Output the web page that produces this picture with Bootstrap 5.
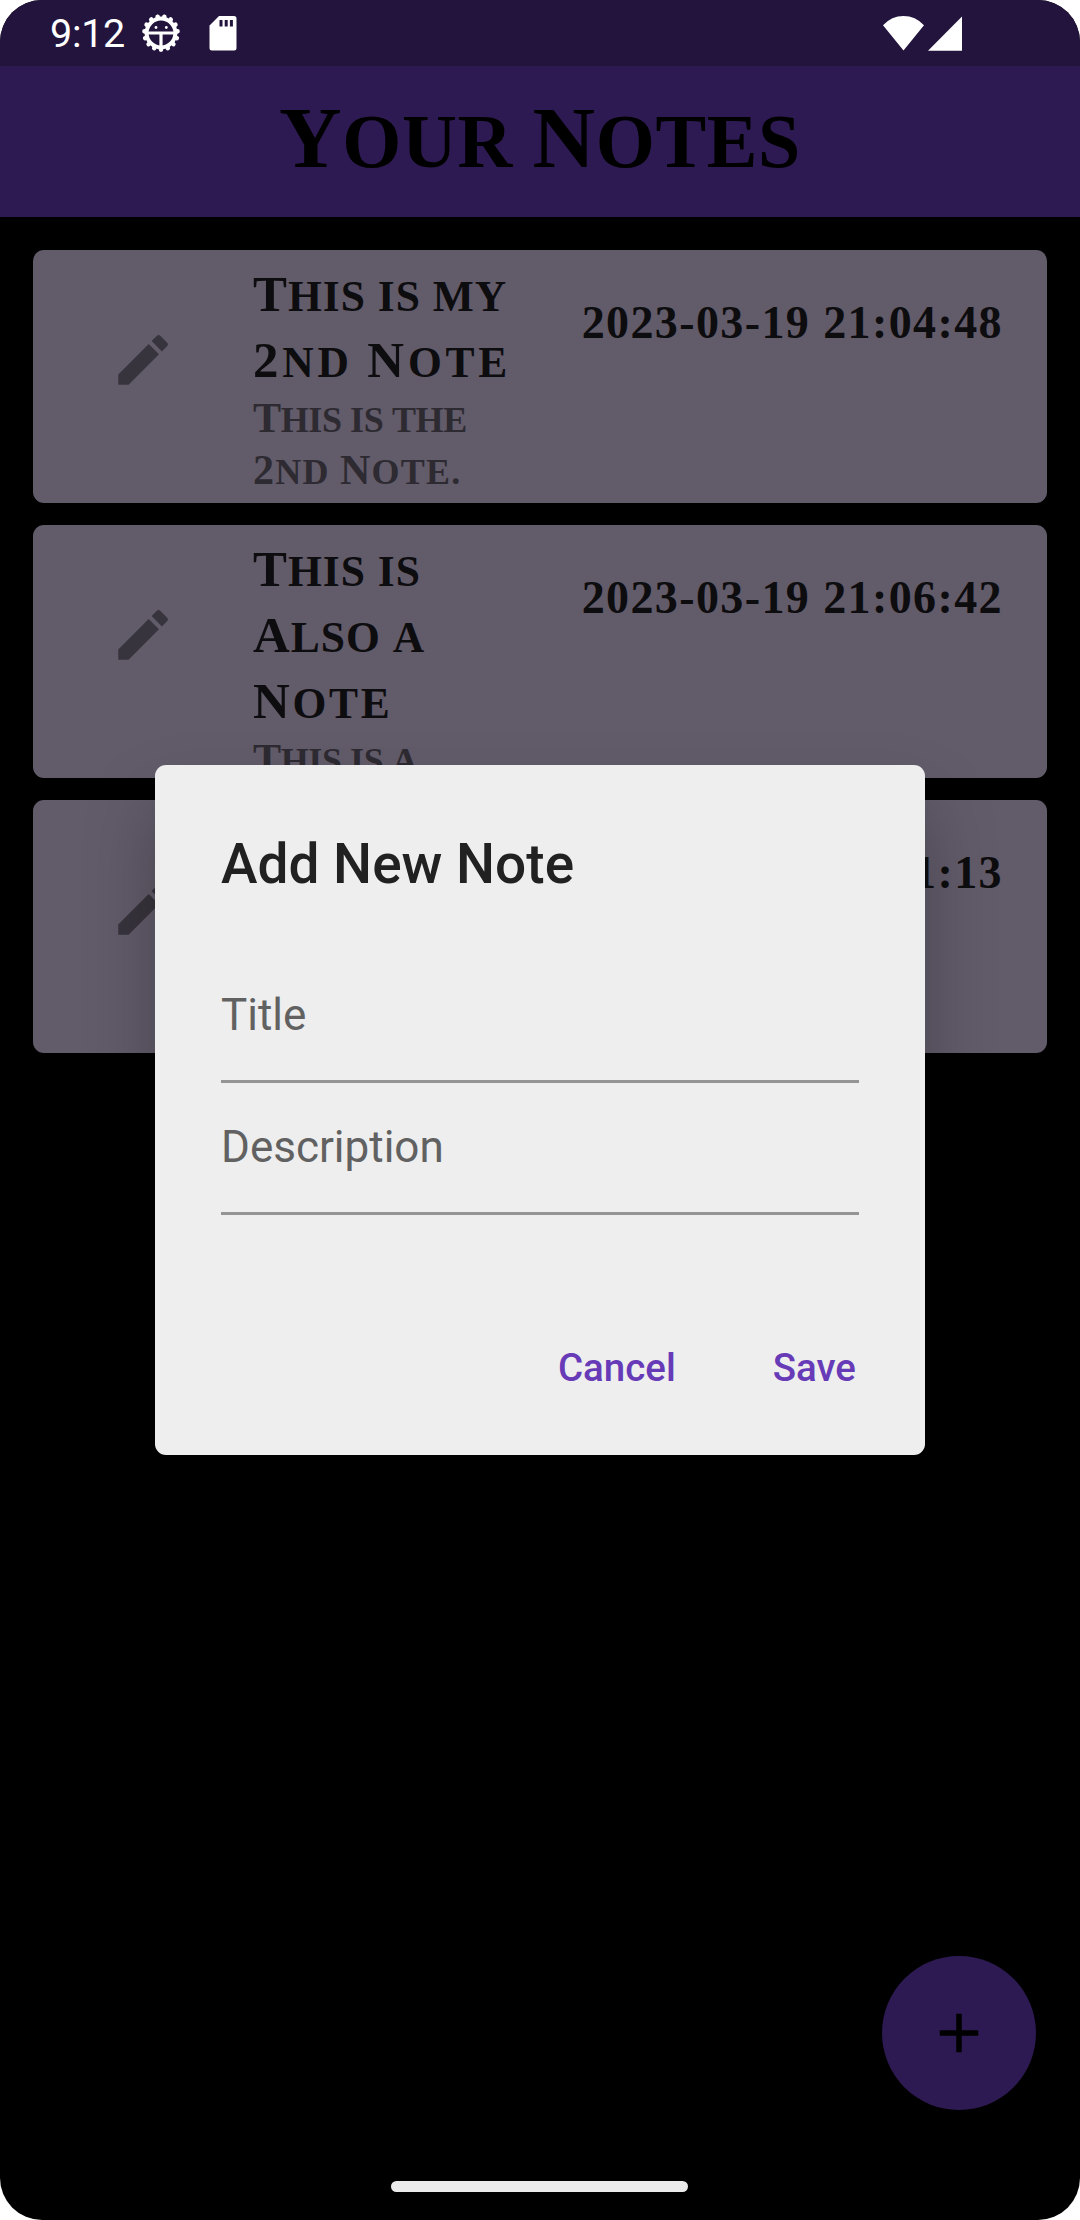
<!DOCTYPE html>
<html lang="en">
<head>
<meta charset="utf-8">
<meta name="viewport" content="width=device-width, initial-scale=1">
<title>Your Notes</title>
<link href="https://cdn.jsdelivr.net/npm/bootstrap@5.3.0/dist/css/bootstrap.min.css" rel="stylesheet">
<style>
body { background: #fff; font-family: Roboto, sans-serif; }
.phone { width: 1080px; height: 2220px; background: #000; border-radius: 42px; }
.status-bar { height: 66px; background: #23143e; padding: 0 118px 0 50px; }
.clock { font-size: 39.5px; line-height: 66px; width: 91px; letter-spacing: -.3px; padding-top: 1px; }
.app-bar { height: 151px; background: #2e1a52; }
/* engraved capitals: lowercase letters drawn as slightly smaller capitals */
.engraved { font-family: "Liberation Serif", serif; font-weight: 700; text-transform: uppercase; white-space: nowrap; font-kerning: none; }
.engraved b { font-weight: 700; font-size: 1.17em; line-height: 0; }
.app-title { font-size: 76px; line-height: 151px; color: #000; letter-spacing: .6px; }
.app-title b { font-size: 1.14em; }
.note-list { padding: 33px 33px 0; gap: 22px; }
.note { height: 253px; background: #625b6a; border-radius: 11px; border: 0; padding: 13px 44px 0 77px; color: #0d0c0e; }
.note-icon { width: 66px; height: 66px; margin: 64px 77px 0 0; fill: #38343d; }
.note-title { font-size: 43.5px; line-height: 66px; }
.note-text { font-size: 36px; line-height: 52px; margin-top: -1px; color: #2d2a31; }
.note-date { font-size: 46px; line-height: 52px; margin-top: 34px; letter-spacing: 1.4px; }
.t1 { letter-spacing: 1px; } .t2 { letter-spacing: 3.8px; } .t3 { letter-spacing: 2.7px; }
.s1 { letter-spacing: -.4px; } .s2 { letter-spacing: 1.2px; }
.dialog { left: 155px; top: 765px; width: 770px; height: 690px; background: #eee; border: 0; border-radius: 11px; padding: 66px 66px 40px; box-shadow: 0 40px 70px rgba(0,0,0,.25); }
.dialog h2 { font-size: 55px; line-height: 66px; font-weight: 500; color: #212121; margin: 0 0 54px; }
.field { font-size: 44px; line-height: 52px; height: 132px; flex-shrink: 0; padding: 38px 0 0; color: #616161; border-bottom: 3px solid #949494; }
.actions { gap: 97px; margin-top: 127px; padding-right: 3px; }
.actions .btn { font-size: 38.5px; line-height: 52px; font-weight: 500; color: #673ab7; border: 0; }
.fab { right: 44px; bottom: 110px; width: 154px; height: 154px; background: #2e1a52; border: 0; }
.home-pill { left: 391px; bottom: 28px; width: 297px; height: 11px; background: #ebebeb; }
</style>
</head>
<body>
<main class="phone position-relative overflow-hidden">
  <header class="status-bar d-flex align-items-center text-white">
    <span class="clock">9:12</span>
    <svg width="40" height="40" viewBox="0 0 40 40" fill="none" stroke="#fff">
      <circle cx="20" cy="20" r="16.6" stroke-width="4.6" stroke-linecap="round" pathLength="15" stroke-dasharray="0.001 0.999" transform="rotate(90 20 20)"/>
      <circle cx="20" cy="20" r="14.4" stroke-width="4"/>
      <path d="M7 20h26M20 20v14" stroke-width="3.2"/>
      <circle cx="15" cy="14.5" r="1.4" fill="#fff" stroke="none"/><circle cx="25.3" cy="14.5" r="1.4" fill="#fff" stroke="none"/>
    </svg>
    <svg class="ms-4 ps-1" width="32" height="35" viewBox="0 0 28 35">
      <path fill="#fff" fill-rule="evenodd" d="M10 0h15q2.500 0 2.500 2.500v29.500q0 2.500-2.500 2.500h-22q-2.500 0-2.500-2.500v-22.500zM10.500 4v6.500h3V4zM15.700 4v6.500h3V4zM20.900 4v6.500h3V4z"/>
    </svg>
    <svg class="ms-auto" width="79" height="35" viewBox="0 0 79 35" fill="#fff">
      <path d="M0 9.300Q8.500 0 20.500 0T41 9.300L20.500 34.500zM45 34.800L79 .5v34.300z"/>
    </svg>
  </header>
  <div class="app-bar text-center">
    <h1 class="engraved app-title m-0"><b>Y</b>our <b>N</b>otes</h1>
  </div>
  <section class="note-list d-flex flex-column">
    <article class="note card flex-row align-items-start">
      <svg class="note-icon flex-shrink-0" viewBox="0 0 24 24"><path d="M3 17.250V21h3.750L17.810 9.940l-3.750-3.750L3 17.250zM20.710 7.040a1 1 0 0 0 0-1.410l-2.340-2.340a1 1 0 0 0-1.410 0l-1.830 1.830 3.750 3.750 1.830-1.830z"/></svg>
      <div class="engraved">
        <div class="note-title"><div class="t1"><b>T</b>his is my</div><div class="t2"><b>2</b>nd <b>N</b>ote</div></div>
        <div class="note-text"><div class="s1"><b>T</b>his is the</div><div class="s2"><b>2</b>nd <b>N</b>ote.</div></div>
      </div>
      <time class="engraved note-date ms-auto">2023-03-19 21:04:48</time>
    </article>
    <article class="note card flex-row align-items-start">
      <svg class="note-icon flex-shrink-0" viewBox="0 0 24 24"><path d="M3 17.250V21h3.750L17.810 9.940l-3.750-3.750L3 17.250zM20.710 7.040a1 1 0 0 0 0-1.410l-2.340-2.340a1 1 0 0 0-1.410 0l-1.830 1.830 3.750 3.750 1.830-1.830z"/></svg>
      <div class="engraved">
        <div class="note-title"><div class="t1"><b>T</b>his is</div><div class="t1"><b>A</b>lso a</div><div class="t3"><b>N</b>ote</div></div>
        <div class="note-text"><div class="s1"><b>T</b>his is a</div></div>
      </div>
      <time class="engraved note-date ms-auto">2023-03-19 21:06:42</time>
    </article>
    <article class="note card flex-row align-items-start">
      <svg class="note-icon flex-shrink-0" viewBox="0 0 24 24"><path d="M3 17.250V21h3.750L17.810 9.940l-3.750-3.750L3 17.250zM20.710 7.040a1 1 0 0 0 0-1.410l-2.340-2.340a1 1 0 0 0-1.410 0l-1.830 1.830 3.750 3.750 1.830-1.830z"/></svg>
      <time class="engraved note-date ms-auto">2023-03-19 21:11:13</time>
    </article>
  </section>

  <section class="dialog position-absolute d-flex flex-column" role="dialog" aria-label="Add New Note">
    <h2>Add New Note</h2>
    <div class="field">Title</div>
    <div class="field">Description</div>
    <div class="actions d-flex justify-content-end">
      <button class="btn p-0" type="button">Cancel</button>
      <button class="btn p-0" type="button">Save</button>
    </div>
  </section>

  <button class="fab btn rounded-circle position-absolute d-flex align-items-center justify-content-center p-0" type="button" aria-label="Add note">
    <svg width="66" height="66" viewBox="0 0 24 24"><path fill="#000" d="M19 13h-6v6h-2v-6H5v-2h6V5h2v6h6v2z"/></svg>
  </button>
  <div class="home-pill rounded-pill position-absolute"></div>
</main>
<script src="https://cdn.jsdelivr.net/npm/bootstrap@5.3.0/dist/js/bootstrap.bundle.min.js"></script>
</body>
</html>
